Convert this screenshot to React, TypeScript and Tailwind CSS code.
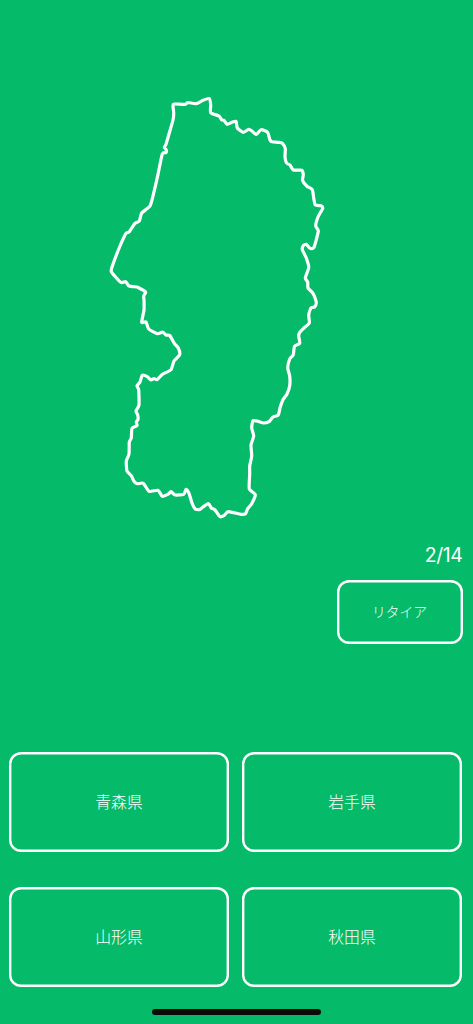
import { useState } from 'react';

type Point = [number, number];

const YAMAGATA_OUTLINE: Point[] = [
  // north coast to the north-east corner
  [174, 104], [185, 104.3], [188, 102.5], [196, 103.7], [203, 100.3], [209.3, 98.5], [210.7, 105], [210.7, 112.7],
  [219, 116], [221.5, 119.7], [224, 120.3], [227, 124.3], [231, 122.7], [236, 121.3], [237.3, 128],
  [243.3, 132.3], [248.7, 129.3], [252, 131], [256.3, 134.5], [261, 129.7], [267.5, 132.3], [270, 140],
  [272, 141.7], [278.7, 142.3], [282.5, 143.3], [285.3, 148.7], [285, 157], [286.5, 163], [290, 165], [293.3, 170], [301.7, 170.3],
  [303.3, 175], [302.5, 180.3], [306.7, 186], [312.3, 189.7], [313.7, 198],
  // eastern border
  [315.3, 205], [321, 205.7], [322.7, 208.3], [318, 217], [315.7, 226], [318.3, 231], [314, 247.3], [310, 248.3],
  [306.3, 244.3], [303.3, 245.7], [302.3, 249.7], [306.3, 258], [308.7, 267.5], [305.3, 278], [307.7, 282], [308, 288],
  [312.3, 292.5], [314.3, 296], [316.3, 302.7], [314.5, 307], [311, 308], [308.7, 315], [309.3, 323], [304, 328], [299.7, 332.3],
  [298.7, 336], [299.7, 343.3], [294.5, 346.3], [293.3, 354.7], [289.7, 359], [287.7, 368], [289.7, 376], [289.7, 385.7],
  [287, 394], [283, 399.7], [280, 408], [278.3, 415], [273, 417], [269, 421.7], [263.3, 423], [258, 421.3], [253, 420.7],
  [251.7, 428], [253.7, 436], [251, 445], [251.7, 456], [249.7, 466], [249.7, 474], [249.3, 489], [255.3, 494.7],
  // southern border
  [251.7, 503.7], [247.7, 508.7], [245.5, 513.7], [241, 514.3], [228.3, 511.7], [224.3, 515.3], [220, 516.7],
  [215, 510], [211.3, 508], [208.5, 503.7], [203, 507], [199.3, 509.7], [195, 508.7], [192, 503], [189, 493.3],
  [186, 489.3], [183.7, 494.3], [175.3, 495], [171, 491.7], [168.3, 494], [162.3, 496.3], [158, 490.3], [149, 491.3],
  [143.3, 483.3], [137.3, 483.7], [134, 481.3], [131.3, 475.7], [127, 471],
  // western border
  [126.3, 461], [129, 454], [129.3, 442], [131.3, 438], [132, 428.3], [137, 425.5], [136.3, 422], [138, 419.5], [137.7, 415], [136, 411],
  [139, 405], [138.7, 390], [137, 385.7], [140, 382], [142.3, 375.3], [147.3, 376.7], [151, 380], [154, 378.5], [157, 379.7],
  [162.5, 374.3], [171, 369.7], [174, 361], [179.7, 354.7], [178.3, 348], [174.3, 343.3], [169.7, 335.5],
  [166, 335], [162.7, 332], [157.3, 333.7], [148.7, 329], [146, 322], [141.7, 322.3], [144, 310], [144, 300],
  [143.7, 296], [145.7, 292.5], [144, 290.7], [139, 288], [137, 287], [129, 286], [125.7, 281.7], [120.7, 282.3],
  [111.3, 271.7], [113, 264.3], [120, 246], [126, 233.3], [129, 232], [135, 223.3], [139.3, 221], [141.7, 213],
  [150, 206], [153.7, 193], [158, 174.3], [162.3, 154], [166, 152.5], [166.3, 150], [164.3, 147.5], [166, 144.3],
  [169, 134], [173, 120], [173.7, 113], [173, 106],
];

const choices = ['青森県', '岩手県', '山形県', '秋田県'];

// closed curve through every point
function smoothPath(points: Point[]) {
  const n = points.length;
  const k = 0.1;
  let d = `M${points[0][0]} ${points[0][1]}`;
  for (let i = 0; i < n; i++) {
    const a = points[(i + n - 1) % n];
    const b = points[i];
    const c = points[(i + 1) % n];
    const e = points[(i + 2) % n];
    d += `C${b[0] + (c[0] - a[0]) * k} ${b[1] + (c[1] - a[1]) * k} ${c[0] - (e[0] - b[0]) * k} ${c[1] - (e[1] - b[1]) * k} ${c[0]} ${c[1]}`;
  }
  return d + 'Z';
}

function PrefectureShape() {
  return (
    <svg viewBox="0 0 473 540" className="block h-[540px] w-full shrink-0" fill="none">
      <path d={smoothPath(YAMAGATA_OUTLINE)} stroke="white" strokeWidth="3.2" strokeLinejoin="round" />
    </svg>
  );
}

export default function App() {
  const [selected, setSelected] = useState<string | null>(null);

  return (
    <main className="flex h-[1024px] w-full flex-col overflow-hidden bg-[#05bb69] text-white font-['Inter','Noto_Sans_CJK_JP',sans-serif]">
      <PrefectureShape />

      {/* Progress and retire */}
      <div className="flex flex-col items-end pr-[10.5px]">
        <div className="h-10 pt-px text-[19.5px] leading-7 tracking-[-0.4px] font-['Inter',sans-serif]">2/14</div>
        <button className="h-16 w-[126px] rounded-xl pt-px text-[13.7px] font-light shadow-[inset_0_0_0_2.4px_white]">
          リタイア
        </button>
      </div>

      {/* Answers */}
      <div className="mt-[108px] grid grid-cols-2 gap-x-[13px] gap-y-[35.5px] pl-[9px] pr-[11px]">
        {choices.map((name) => (
          <button
            key={name}
            onClick={() => setSelected(name)}
            aria-pressed={selected === name}
            className="h-[99.5px] rounded-xl pt-[2.5px] text-[15.8px] font-light shadow-[inset_0_0_0_2.4px_white]"
          >
            {name}
          </button>
        ))}
      </div>

      <div className="mx-auto mt-[22.5px] h-1.5 w-[169px] rounded-full bg-[#0a0a0a]" />
    </main>
  );
}
